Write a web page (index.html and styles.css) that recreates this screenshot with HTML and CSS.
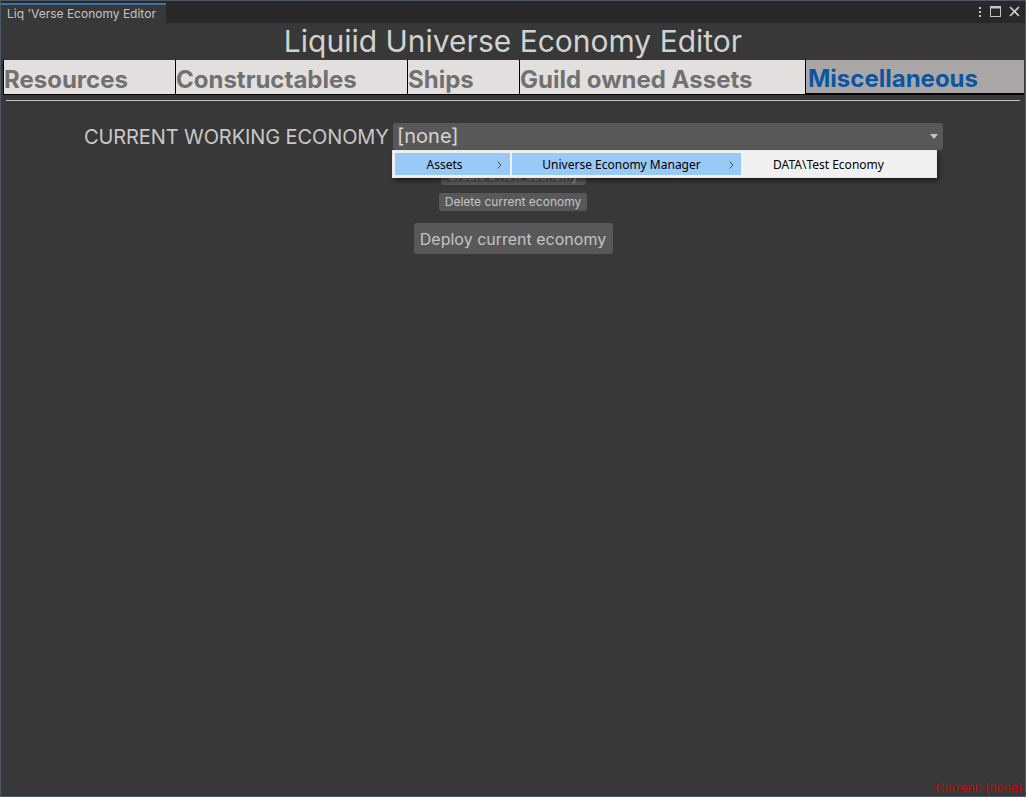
FILE: index.html
```html
<!DOCTYPE html>
<html>
<head>
<meta charset="utf-8">
<link rel="stylesheet" href="styles.css">
</head>
<body>
<div class="window">
  <div class="titlebar">
    <div class="wtab">Liq 'Verse Economy Editor</div>
    <div class="wcontrols">
      <svg width="4" height="11" viewBox="0 0 4 11"><rect x="1" y="1" width="2" height="2" fill="#c4c4c4"/><rect x="1" y="5" width="2" height="2" fill="#c4c4c4"/><rect x="1" y="9" width="2" height="2" fill="#c4c4c4"/></svg>
      <svg width="11" height="11" viewBox="0 0 11 11"><rect x="0.5" y="0.5" width="10" height="10" fill="none" stroke="#c4c4c4"/><rect x="0.5" y="0.5" width="10" height="2" fill="#c4c4c4"/></svg>
      <svg width="11" height="11" viewBox="0 0 11 11"><path d="M1 1 L10 10 M10 1 L1 10" stroke="#d0d0d0" stroke-width="1.6"/></svg>
    </div>
  </div>
  <div class="content">
    <h1 class="title">Liquiid Universe Economy Editor</h1>
    <div class="tabs">
      <div class="tab t1">Resources</div>
      <div class="tab t2">Constructables</div>
      <div class="tab t3">Ships</div>
      <div class="tab t4">Guild owned Assets</div>
      <div class="tab t5 active">Miscellaneous</div>
    </div>
    <div class="rule"></div>
    <div class="field">
      <label class="field-label">CURRENT WORKING ECONOMY</label>
      <div class="dropdown">
        <span>[none]</span>
        <svg class="arrow" width="8" height="5" viewBox="0 0 8 5"><path d="M0 0 L8 0 L4 5 Z" fill="#c4c4c4"/></svg>
        <div class="menu">
          <div class="mi sel w1"><span>Assets</span><svg class="chev" width="5" height="8" viewBox="0 0 5 8"><path d="M0.5 0.5 L4 4 L0.5 7.5" fill="none" stroke="#444" stroke-width="1"/></svg></div>
          <div class="msep"></div>
          <div class="mi sel w2"><span>Universe Economy Manager</span><svg class="chev" width="5" height="8" viewBox="0 0 5 8"><path d="M0.5 0.5 L4 4 L0.5 7.5" fill="none" stroke="#444" stroke-width="1"/></svg></div>
          <div class="mi w3"><span>DATA\Test Economy</span></div>
        </div>
      </div>
    </div>
    <div class="buttons">
      <button class="btn small create">Create a new economy</button>
      <button class="btn small">Delete current economy</button>
      <button class="btn big">Deploy current economy</button>
    </div>
    <div class="status">Current: [none]</div>
  </div>
</div>
</body>
</html>
```
FILE: styles.css
```css
* { box-sizing: border-box; }
html, body { margin: 0; padding: 0; background: #4b5866; }
body { width: 1026px; height: 797px; font-family: Inter, "Noto Sans", sans-serif; }
.window {
  width: 1026px; height: 797px;
  border: 1px solid #4b5866;
  display: flex; flex-direction: column;
  background: #383838;
}
.titlebar {
  height: 22px; background: #282828;
  display: flex; align-items: flex-end; justify-content: space-between;
  flex-shrink: 0;
}
.wtab {
  width: 165px; height: 20px; background: #383838;
  border-top: 2px solid #3b74ad;
  color: #c4c4c4; font-size: 12px; line-height: 18px;
  padding-left: 6px;
}
.wcontrols { display: flex; gap: 8px; align-items: center; height: 22px; padding-right: 5px; padding-bottom: 1px; }
.content { flex: 1; display: flex; flex-direction: column; position: relative; }
.title {
  margin: 0; text-align: center; font-weight: 400;
  font-size: 30px; line-height: 36px; color: #d2d2d2; height: 36px;
  letter-spacing: 0;
}
.tabs { display: flex; height: 36px; margin-left: 2px; margin-right: 1px; }
.tab {
  background: #e4dfdf; color: #717171; font-weight: 700;
  font-size: 24px; line-height: 40px; padding-left: 0;
  border-right: 1px solid #000; border-bottom: 1px solid #000; border-top: 1px solid #3a3a3a;
  overflow: hidden; white-space: nowrap;
}
.t1 { width: 173px; border-left: 1px solid #000; }
.t2 { width: 232px; }
.t3 { width: 112px; }
.t4 { width: 286px; }
.t5 { flex: 1; border-right: none; }
.tab.active { background: #aba6a6; color: #0b56a3; border-left: 1px solid #000; border-bottom: 2px solid #000; margin-left: -1px; line-height: 38px; padding-left: 2px; }
.rule { height: 1px; background: #c2c2c2; margin: 5px 5px 0 5px; }
.field { display: flex; align-items: center; margin-top: 22px; padding-left: 83px; height: 27px; }
.field-label { color: #c8c8c8; font-size: 20px; width: 309px; white-space: nowrap; letter-spacing: -0.1px; }
.dropdown {
  position: relative; width: 550px; height: 27px; background: #585858; border-radius: 3px;
  color: #d4d4d4; font-size: 20px; line-height: 27px; padding-left: 4px;
}
.arrow { position: absolute; right: 5px; top: 11px; }
.menu {
  position: absolute; left: -1px; top: 27px; width: 545px; height: 28px;
  background: #f0f0f0; border: 1px solid #e9e9e9;
  box-shadow: 2px 3px 4px rgba(0,0,0,0.45);
  display: flex; padding: 2px 0 2px 2px; z-index: 5;
  font-family: "Segoe UI", "Noto Sans", "Liberation Sans", sans-serif; font-size: 12px; color: #000;
}
.mi { display: flex; align-items: center; height: 22px; position: relative; }
.mi.sel { background: #99c9f7; }
.w1 { width: 115px; justify-content: center; }
.w1 span { margin-left: -16px; }
.w1 .chev { position: absolute; right: 8px; top: 8px; }
.msep { width: 2px; background: #f0f0f0; }
.w2 { width: 229px; justify-content: center; }
.w2 span { margin-left: -10px; }
.w2 .chev { position: absolute; right: 7px; top: 8px; }
.w3 { flex: 1; justify-content: center; padding-right: 20px; }
.buttons { display: flex; flex-direction: column; align-items: center; margin-top: 17px; }
.btn {
  background: #585858; color: #c4c4c4; border: none; border-radius: 3px;
  font-family: Inter, "Noto Sans", sans-serif; padding: 0 6px; cursor: default;
}
.btn.small { font-size: 12px; height: 18px; line-height: 18px; }
.btn.create { width: 145px; margin-bottom: 8px; color: #a0a0a0; }
.btn.big { font-size: 16px; height: 31px; margin-top: 12px; width: 199px; }
.status {
  position: absolute; right: 3px; bottom: 0; color: #d00000; font-size: 12px; line-height: 16px;
}
```
